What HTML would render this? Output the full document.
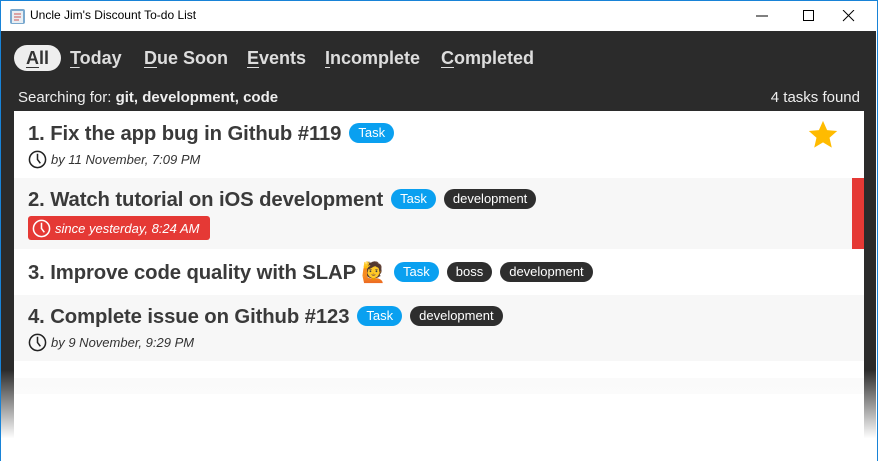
<!DOCTYPE html>
<html><head><meta charset="utf-8"><style>
*{margin:0;padding:0;box-sizing:border-box}
body{width:878px;height:461px;overflow:hidden;font-family:"Liberation Sans",sans-serif;background:#fff;position:relative}
.win{position:absolute;left:0;top:0;width:878px;height:461px;border:1px solid #1883d7;border-bottom:none}
.title{position:absolute;left:0;top:0;width:876px;height:31px;background:#fff}
.title .t{position:absolute;left:30px;top:8px;font-size:12px;color:#000}
.dark{position:absolute;left:0;top:31px;width:876px;height:430px;background:#2b2b2b}
.fade{position:absolute;left:0;top:370px;width:878px;height:91px;background:linear-gradient(rgba(255,255,255,0),#fff 75%)}
.nav{position:absolute;top:46px;left:14px;font-size:18px;font-weight:bold;color:#ddd}
.nav span{position:absolute;top:0;white-space:nowrap}
.nav u{text-decoration-thickness:1px;text-underline-offset:3px}
.nav .all{background:#eee;color:#333;border-radius:14px;height:26px;width:47px;text-align:center;line-height:26px;top:-1px}
.search{position:absolute;top:89px;left:18px;color:#eee;font-size:15px}
.found{position:absolute;top:89px;right:18px;color:#eee;font-size:15px}
.list{position:absolute;left:14px;top:111px;width:850px;height:350px;background:#fff}
.row{position:absolute;left:0;width:850px}
.row h2{position:absolute;left:14px;font-size:20.3px;font-weight:bold;color:#3a3a3a;white-space:nowrap;letter-spacing:-0.1px}
.tag{display:inline-block;font-size:13px;font-weight:normal;padding:0 9px;height:20px;line-height:20px;border-radius:10px;color:#fff;vertical-align:3px;margin-left:8px;letter-spacing:0}
.blue{background:#0aa0f0}.blk{background:#2e2e2e}
.date{position:absolute;left:14px;font-size:13px;font-style:italic;color:#333;display:flex;align-items:center;gap:4px}
.date.red{background:#e53935;color:#fff;border-radius:3px;padding:2px 10px 2px 4px;height:24px}
</style></head><body>
<div class="dark"></div>
<div class="title">
<svg style="position:absolute;left:9px;top:7px" width="18" height="18"><rect x="1" y="2" width="15" height="15" rx="2" fill="#7aa9cf"/><rect x="3" y="4" width="11" height="12" fill="#e8eef3"/><path d="M5 7h7M5 10h7M5 13h5" stroke="#c55" stroke-width="1"/></svg>
<div class="t">Uncle Jim's Discount To-do List</div>
<svg style="position:absolute;left:756px;top:10px" width="110" height="12"><path d="M0 6h12" stroke="#000"/><rect x="47.5" y="0.5" width="10" height="10" fill="none" stroke="#000"/><path d="M87 0l11 11M98 0l-11 11" stroke="#000"/></svg>
</div>
<div class="nav">
<span class="all" style="left:0"><u>A</u>ll</span>
<span style="left:56px;top:2px"><u>T</u>oday</span>
<span style="left:130px;top:2px"><u>D</u>ue Soon</span>
<span style="left:233px;top:2px"><u>E</u>vents</span>
<span style="left:311px;top:2px"><u>I</u>ncomplete</span>
<span style="left:427px;top:2px"><u>C</u>ompleted</span>
</div>
<div class="search">Searching for: <b>git, development, code</b></div>
<div class="found">4 tasks found</div>
<div class="list">
<div class="row" style="top:0;height:67px;background:#fff">
<h2 style="top:12px">1. Fix the app bug in Github #119<span class="tag blue">Task</span></h2>
<svg style="position:absolute;left:792px;top:7px" width="34" height="34" viewBox="0 0 24 24"><path d="M12 2l2.9 6.6 7.1.6-5.4 4.7 1.6 7-6.2-3.7-6.2 3.7 1.6-7L2 9.2l7.1-.6z" fill="#ffbb00"/></svg>
<div class="date" style="top:39px"><svg width="19" height="19" viewBox="0 0 20 20"><circle cx="10" cy="10" r="8.5" fill="none" stroke="#222" stroke-width="1.6"/><path d="M10 4v6l3 4" fill="none" stroke="#222" stroke-width="1.6"/></svg>by 11 November, 7:09 PM</div>
</div>
<div class="row" style="top:67px;height:71px;background:#f7f7f7">
<h2 style="top:11px">2. Watch tutorial on iOS development<span class="tag blue">Task</span><span class="tag blk">development</span></h2>
<div class="date red" style="top:38px"><svg width="19" height="19" viewBox="0 0 20 20"><circle cx="10" cy="10" r="8.5" fill="none" stroke="#fff" stroke-width="1.6"/><path d="M10 4v6l3 4" fill="none" stroke="#fff" stroke-width="1.6"/></svg>since yesterday, 8:24 AM</div>
<div style="position:absolute;right:0;top:0;width:12px;height:71px;background:#e53935"></div>
</div>
<div class="row" style="top:138px;height:46px;background:#fff">
<h2 style="top:11px">3. Improve code quality with SLAP <span style="font-size:20px">🙋</span><span class="tag blue">Task</span><span class="tag blk">boss</span><span class="tag blk">development</span></h2>
</div>
<div class="row" style="top:184px;height:66px;background:#f7f7f7">
<h2 style="top:11px">4. Complete issue on Github #123<span class="tag blue">Task</span><span class="tag blk">development</span></h2>
<div class="date" style="top:38px"><svg width="19" height="19" viewBox="0 0 20 20"><circle cx="10" cy="10" r="8.5" fill="none" stroke="#222" stroke-width="1.6"/><path d="M10 4v6l3 4" fill="none" stroke="#222" stroke-width="1.6"/></svg>by 9 November, 9:29 PM</div>
</div>
<div class="row" style="top:267px;height:16px;background:#f9f9f9"></div>
</div>
<div class="fade"></div>
<div class="win"></div>
</body></html>
